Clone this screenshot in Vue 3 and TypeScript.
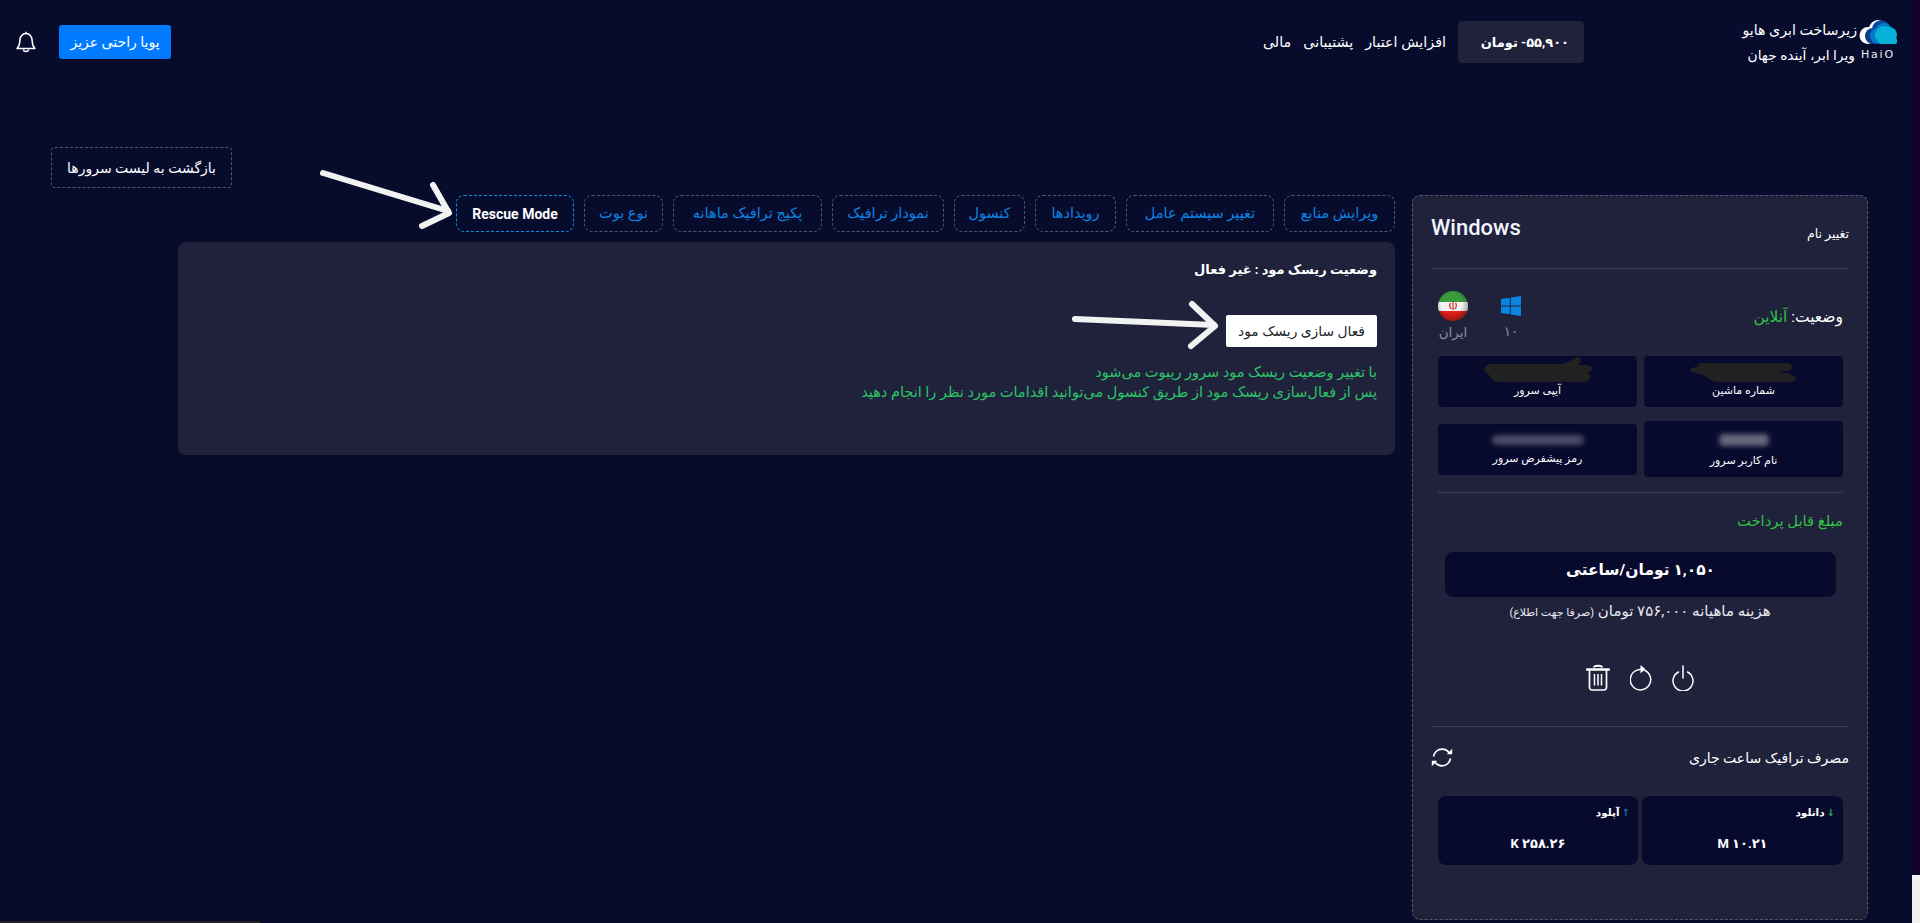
<script setup lang="ts">
const tabs: string[] = ['ویرایش منابع', 'تغییر سیستم عامل', 'رویدادها', 'کنسول', 'نمودار ترافیک', 'پکیج ترافیک ماهانه', 'نوع بوت']
</script>

<template>
  <div class="root" dir="rtl">
    <div class="page">
      <header class="header">
        <div class="brand">
          <div class="brand-row">
            <svg class="cloud" viewBox="0 0 38 24" width="38" height="24">
              <circle cx="9" cy="15.500" r="8.500" fill="#fff" />
              <circle cx="19" cy="9" r="9" fill="#fff" />
              <circle cx="14" cy="16" r="8" fill="#0a3f8e" />
              <circle cx="22" cy="9" r="8.800" fill="#0a4a9e" />
              <circle cx="19" cy="16" r="8" fill="#0679c9" />
              <circle cx="25" cy="11" r="8" fill="#0679c9" />
              <circle cx="25" cy="15" r="9" fill="#07b2d9" />
              <circle cx="30" cy="15" r="8" fill="#07b2d9" />
              <rect x="20" y="18" width="18" height="6" rx="2" fill="#07b2d9" />
            </svg>
            <span class="brand-title">زیرساخت ابری هایو</span>
          </div>
          <div class="brand-row sub">
            <span class="haio">HaiO</span>
            <span class="brand-sub">ویرا ابر، آینده جهان</span>
          </div>
        </div>
        <nav class="nav">
          <div class="balance">۵۵,۹۰۰- تومان</div>
          <a class="nav-link">افزایش اعتبار</a>
          <a class="nav-link">پشتیبانی</a>
          <a class="nav-link">مالی</a>
        </nav>
        <div class="user">
          <button class="user-btn">پویا راحتی عزیز</button>
          <svg class="bell" viewBox="0 0 20 23" width="20" height="23" fill="none" stroke="#fff" stroke-width="1.500">
            <path d="M1 17.500h18c-1.600-1.600-2.800-3-2.800-7.500 0-4.200-2.400-7.400-6.200-7.400S3.800 5.800 3.800 10c0 4.500-1.200 5.900-2.800 7.500Z" stroke-linejoin="round" />
            <path d="M7.500 18.500c0 2.600 5 2.600 5 0" />
            <path d="M10 .8v1.800" />
          </svg>
        </div>
      </header>

      <div class="back-row">
        <a class="back">بازگشت به لیست سرورها</a>
      </div>

      <main class="main">
        <aside class="card">
          <div class="card-head">
            <span class="rename">تغییر نام</span>
            <span class="os-title">Windows</span>
          </div>

          <div class="status-row">
            <div class="status">وضعیت: <span class="green">آنلاین</span></div>
            <div class="os-icons">
              <div class="os-col win">
                <svg viewBox="0 0 20 20" width="20" height="20">
                  <path d="M0 3 8.800 1.700V9.500H0ZM9.800 1.600 20 0V9.500H9.800ZM0 10.500H8.800V18.300L0 17ZM9.800 10.500H20V20L9.800 18.400Z" fill="#0a84e0" />
                </svg>
                <span class="os-label">۱۰</span>
              </div>
              <div class="os-col">
                <svg viewBox="0 0 30 30" width="30" height="30">
                  <defs>
                    <clipPath id="flag-clip"><circle cx="15" cy="15" r="15" /></clipPath>
                    <radialGradient id="flag-shade" cx="45%" cy="40%" r="65%">
                      <stop offset="55%" stop-color="#000" stop-opacity="0" />
                      <stop offset="100%" stop-color="#000" stop-opacity=".4" />
                    </radialGradient>
                  </defs>
                  <g clip-path="url(#flag-clip)">
                    <rect width="30" height="11" fill="#3a9a3a" />
                    <rect y="11" width="30" height="9" fill="#f2f2f2" />
                    <rect y="20" width="30" height="10" fill="#e0201b" />
                    <path d="M15 11v8M12.500 12c-1.500 2-1 5 1 6M17.500 12c1.500 2 1 5-1 6" stroke="#d8362f" stroke-width="1.300" fill="none" />
                    <circle cx="15" cy="15" r="15" fill="url(#flag-shade)" />
                  </g>
                </svg>
                <span class="os-label">ایران</span>
              </div>
            </div>
          </div>

          <div class="info-grid">
            <div class="info tall-1">
              <svg class="scribble s1" viewBox="0 0 108 19" width="108" height="19">
                <path d="M10 0H96C104 0 105 7 96 8 88 9 90 10 96 10 106 11 110 19 100 19H28C20 19 18 13 10 11 -2 9 -2 5 6 4 8 4 8 0 10 0Z" fill="#212121" />
              </svg>
              <span class="info-label">شماره ماشین</span>
            </div>
            <div class="info tall-1">
              <svg class="scribble s2" viewBox="0 0 108 25" width="108" height="25">
                <path d="M6 7H76C84 6 90 1 94 0 98 0 98 5 94 8H102C110 8 110 15 103 16 110 18 106 25 98 25H16C8 25 6 19 4 17 -1 15 -1 8 6 7Z" fill="#212121" />
              </svg>
              <span class="info-label">آیپی سرور</span>
            </div>
            <div class="info tall-2">
              <div class="blurred b1"></div>
              <span class="info-label">نام کاربر سرور</span>
            </div>
            <div class="info tall-1">
              <div class="blurred b2"></div>
              <span class="info-label">رمز پیشفرض سرور</span>
            </div>
          </div>

          <div class="divider inset"></div>

          <div class="pay-title">مبلغ قابل پرداخت</div>
          <div class="price">۱,۰۵۰ تومان/ساعتی</div>
          <div class="monthly">هزینه ماهیانه ۷۵۶,۰۰۰ تومان <small>(صرفا جهت اطلاع)</small></div>

          <div class="actions">
            <svg viewBox="0 0 22 26" width="22" height="26" fill="none" stroke="#fff" stroke-width="1.500" stroke-linecap="round">
              <path d="M11 1v12" />
              <path d="M6.500 7a10 10 0 1 0 9 0" />
            </svg>
            <svg viewBox="0 0 22 26" width="22" height="26" fill="none" stroke="#fff" stroke-width="1.500">
              <path d="M14.500 5.300A10.200 10.200 0 1 1 7 5.100L11 4.200" />
              <path d="M10.500 0 15.500 4.300 10.500 8.300Z" fill="#fff" stroke="none" />
            </svg>
            <svg viewBox="0 0 24 27" width="24" height="27" fill="none" stroke="#fff" stroke-width="1.700">
              <path d="M1 5.500h22" stroke-width="2.400" stroke-linecap="round" />
              <path d="M8 3.500C8 1 16 1 16 3.500" stroke-width="2" />
              <path d="M3.500 6v17.500a2.500 2.500 0 0 0 2.500 2.500h12a2.500 2.500 0 0 0 2.500-2.500V6" />
              <path d="M8.500 10v11.500M12 10v11.500M15.500 10v11.500" stroke-width="1.500" />
            </svg>
          </div>

          <div class="divider"></div>

          <div class="traffic-head">
            <span class="traffic-title">مصرف ترافیک ساعت جاری</span>
            <svg viewBox="0 0 22 19" width="22" height="19" fill="none" stroke="#fff" stroke-width="1.700">
              <path d="M2.500 8.500C3.500 4 7 1.200 11 1.200c3 0 5.500 1.300 7.300 3.800" />
              <path d="M21.200.8v5.400h-5.400Z" fill="#fff" stroke="none" />
              <path d="M19.500 10.500c-1 4.500-4.500 7.300-8.500 7.300-3 0-5.500-1.300-7.300-3.800" />
              <path d="M.8 18.200v-5.400h5.400Z" fill="#fff" stroke="none" />
            </svg>
          </div>

          <div class="traffic-grid">
            <div class="traffic">
              <div class="traffic-label"><span class="arrow dl">↓</span>دانلود</div>
              <div class="traffic-value">۱۰.۲۱ M</div>
            </div>
            <div class="traffic">
              <div class="traffic-label"><span class="arrow ul">↑</span>آپلود</div>
              <div class="traffic-value">۲۵۸.۲۶ K</div>
            </div>
          </div>
        </aside>

        <section class="content">
          <div class="tabs">
            <a v-for="t in tabs" :key="t" class="tab">{{ t }}</a>
            <a class="tab active">Rescue Mode</a>
          </div>
          <div class="panel">
            <div class="panel-status">وضعیت ریسک مود : غیر فعال</div>
            <button class="activate">فعال سازی ریسک مود</button>
            <p class="note">با تغییر وضعیت ریسک مود سرور ریبوت می‌شود</p>
            <p class="note">پس از فعال‌سازی ریسک مود از طریق کنسول می‌توانید اقدامات مورد نظر را انجام دهید</p>
          </div>
        </section>
      </main>

      <svg class="annot" width="1912" height="923" viewBox="0 0 1912 923" fill="none" stroke="#f2f2f2" stroke-width="6" stroke-linecap="round" stroke-linejoin="round">
        <path d="M323 173 448 211" />
        <path d="M433 185 449 213 422 226" />
        <path d="M1075 319 1214 325" />
        <path d="M1192 304 1215 326 1191 346" />
      </svg>
      <div class="bottom-line"></div>
    </div>
    <div class="scrollbar">
      <div class="track"></div>
      <div class="thumb"></div>
    </div>
  </div>
</template>

<style>
html, body { margin: 0; padding: 0; background: #070b2c; }
</style>

<style scoped>
.root {
  display: flex;
  width: 1920px;
  height: 923px;
  overflow: hidden;
  background: #070b2c;
  color: #fff;
  font-family: Roboto, "DejaVu Sans", sans-serif;
  font-size: 12px;
}
.page {
  position: relative;
  width: 1912px;
  height: 923px;
  flex: none;
}
.scrollbar {
  width: 8px;
  display: flex;
  flex-direction: column;
  order: -1;
  flex: none;
}
.track { height: 875px; background: #13002b; }
.thumb { flex: 1; background: #f1f1f1; }

.header {
  height: 84px;
  display: flex;
  align-items: center;
  padding: 0 15px 0 16px;
}
.brand { width: 156px; display: flex; flex-direction: column; gap: 2px; margin-top: -3px; }
.brand-row { display: flex; align-items: center; gap: 2px; height: 26px; }
.brand-row.sub { gap: 6px; height: 16px; }
.cloud { flex: none; }
.brand-title { font-size: 14.200px; white-space: nowrap; margin-top: -3px; }
.brand-sub { font-size: 13.800px; white-space: nowrap; }
.haio { direction: ltr; width: 36px; flex: none; font-size: 11px; letter-spacing: 1.800px; color: #eee; font-family: "DejaVu Sans", sans-serif; white-space: nowrap; }
.nav { display: flex; align-items: center; margin-right: 157px; }
.balance {
  width: 126px;
  height: 42px;
  box-sizing: border-box;
  padding-right: 15px;
  background: #20223c;
  border-radius: 4px;
  display: flex;
  align-items: center;
  font-size: 13px;
  font-weight: 700;
  white-space: nowrap;
}
.nav-link { font-size: 14.300px; margin-right: 12px; white-space: nowrap; }
.user { margin-right: auto; display: flex; align-items: center; gap: 23px; }
.user-btn {
  width: 112px;
  height: 34px;
  background: #007bff;
  border: 0;
  border-radius: 3px;
  color: #fff;
  font: 400 14px Roboto, "DejaVu Sans", sans-serif;
  white-space: nowrap;
  padding: 0;
}
.bell { display: block; }

.back-row { padding: 63px 0 7px; display: flex; justify-content: flex-end; padding-left: 51px; }
.back {
  width: 181px;
  height: 41px;
  box-sizing: border-box;
  border: 1px dashed #55566e;
  border-radius: 4px;
  display: flex;
  align-items: center;
  justify-content: center;
  font-size: 14px;
  white-space: nowrap;
}

.main { display: flex; gap: 17px; padding-right: 44px; align-items: flex-start; }

.card {
  width: 456px;
  height: 725px;
  box-sizing: border-box;
  background: #20223c;
  border: 1px dashed #55566e;
  border-radius: 8px;
  padding: 0 18px;
  flex: none;
}
.card-head {
  height: 72px;
  border-bottom: 1px solid #3d3f58;
  display: flex;
  justify-content: space-between;
  align-items: flex-start;
}
.rename { font-size: 12.500px; margin-top: 29px; line-height: 18px; white-space: nowrap; }
.os-title { font-size: 22px; font-weight: 500; margin-top: 17px; line-height: 30px; color: #f2f4ff; }

.status-row {
  height: 87px;
  margin: 0 6px 0 7px;
  display: flex;
  justify-content: space-between;
}
.status { font-size: 15.500px; margin-top: 38px; line-height: 20px; white-space: nowrap; }
.green { color: #2fc144; }
.os-icons { display: flex; gap: 33px; padding-top: 22px; align-items: flex-start; }
.os-col { display: flex; flex-direction: column; align-items: center; width: 30px; }
.os-col.win { width: 20px; padding-top: 5px; }
.os-col svg { display: block; }
.os-label { font-size: 13.500px; color: #8e8f9e; margin-top: 2px; line-height: 18px; white-space: nowrap; }
.win .os-label { margin-top: 6px; }

.info-grid {
  margin: 0 6px 0 7px;
  display: grid;
  grid-template-columns: 199px 199px;
  gap: 14px 7px;
  align-items: center;
}
.info {
  background: #070a2d;
  border-radius: 4px;
  display: flex;
  flex-direction: column;
  justify-content: flex-end;
  align-items: center;
  box-sizing: border-box;
  padding-bottom: 8px;
}
.tall-1 { height: 51px; }
.tall-2 { height: 56px; }
.info-label { font-size: 11px; line-height: 16px; white-space: nowrap; }
.scribble { display: block; margin-bottom: 1px; }
.blurred { border-radius: 5px; background: #66677c; filter: blur(2.500px); }
.b1 { width: 50px; height: 12px; margin-bottom: 7px; }
.b2 { width: 92px; height: 10px; background: #4b4c66; margin-bottom: 6px; }

.divider { height: 1px; background: #3d3f58; }
.divider.inset { margin: 15px 6px 0 7px; }

.pay-title { color: #2fc144; font-size: 14.800px; padding: 18px 6px 0; height: 40px; box-sizing: border-box; margin-bottom: 19px; line-height: 20px; white-space: nowrap; }
.price {
  margin: 0 13px 0 14px;
  height: 45px;
  background: #070a2d;
  border-radius: 8px;
  display: flex;
  justify-content: center;
  padding-top: 8px;
  box-sizing: border-box;
  font-size: 15.500px;
  font-weight: 700;
  line-height: 20px;
  white-space: nowrap;
}
.monthly { text-align: center; font-size: 15px; margin-top: 5px; line-height: 18px; white-space: nowrap; color: #e8e8f0; }
.monthly small { font-size: 11px; }
.actions {
  display: flex;
  justify-content: center;
  align-items: center;
  gap: 20px;
  margin-top: 42px;
  margin-bottom: 35px;
  height: 27px;
}
.actions svg { display: block; }

.traffic-head {
  height: 69px;
  display: flex;
  justify-content: space-between;
  align-items: flex-start;
}
.traffic-title { font-size: 14px; margin-top: 22px; line-height: 18px; white-space: nowrap; }
.traffic-head svg { margin-top: 21px; display: block; }
.traffic-grid { margin: 0 6px 0 7px; display: grid; grid-template-columns: 201px 200px; gap: 4px; }
.traffic { height: 69px; background: #070a2d; border-radius: 8px; padding: 9px 8px 0; box-sizing: border-box; }
.traffic-label { font-size: 10.500px; font-weight: 700; line-height: 16px; white-space: nowrap; }
.arrow { font-size: 10px; margin-left: 2px; }
.dl { color: #2fa84a; }
.ul { color: #0b6fc0; }
.traffic-value { text-align: center; font-size: 13px; font-weight: 700; margin-top: 14px; line-height: 18px; }

.content { width: 1217px; flex: none; }
.tabs { display: flex; gap: 10px; height: 37px; margin-bottom: 10px; }
.tab {
  box-sizing: border-box;
  height: 37px;
  border: 1px dashed #55566e;
  border-radius: 8px;
  display: flex;
  align-items: center;
  justify-content: center;
  font-size: 14.500px;
  color: #0d84e3;
  white-space: nowrap;
}
.tab:nth-child(1) { width: 111px; }
.tab:nth-child(2) { width: 148px; }
.tab:nth-child(3) { width: 81px; }
.tab:nth-child(4) { width: 71px; }
.tab:nth-child(5) { width: 112px; }
.tab:nth-child(6) { width: 149px; }
.tab:nth-child(7) { width: 79px; }
.tab.active { width: 118px; border-color: #0f8ed6; color: #fff; font-weight: 700; font-size: 14px; }
.panel {
  height: 213px;
  box-sizing: border-box;
  background: #20223c;
  border-radius: 8px;
  padding: 19px 18px 0;
}
.panel-status { font-size: 13px; font-weight: 700; line-height: 18px; }
.activate {
  display: block;
  width: 151px;
  height: 32px;
  margin-top: 36px;
  background: #fff;
  border: 0;
  border-radius: 2px;
  padding: 0;
  color: #212529;
  font: 13.800px Roboto, "DejaVu Sans", sans-serif;
  white-space: nowrap;
}
.note { margin: 0; color: #2bc46a; font-size: 14.500px; line-height: 20px; }
.activate + .note { margin-top: 16px; }

.annot { position: absolute; left: 0; top: 0; pointer-events: none; }
.bottom-line { position: absolute; left: 0; bottom: 0; width: 260px; height: 2px; background: #222; }
</style>
